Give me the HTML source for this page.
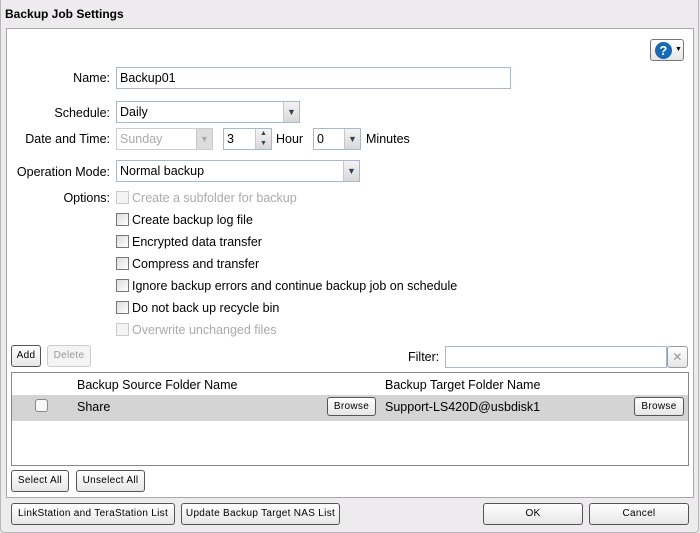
<!DOCTYPE html>
<html><head><style>
*{box-sizing:border-box;margin:0;padding:0}
body{width:700px;height:533px;background:#edebed;font-family:"Liberation Sans",sans-serif;font-size:12.5px;color:#000;position:relative;overflow:hidden}
.a{position:absolute}
.outer{left:0;top:0;width:699px;height:533px;border:1px solid #b8b8b8;border-top:none;border-radius:0 0 4px 4px}
.panel{left:6px;top:28px;width:688px;height:470px;background:#fff;border:1px solid #a8a8a8}
.lbl{text-align:right;width:110px;left:0}
.inp{background:#fff;border:1px solid #a9b8cc;height:22px;padding:3px 3px;white-space:nowrap}
.dd{position:absolute;right:0;top:0;width:16px;height:20px;background:linear-gradient(#f4f4f4,#d8d8d8);border-left:1px solid #c8c8c8;font-size:9px;text-align:center;line-height:20px;color:#345}
.btn{border:1px solid #555;border-radius:3px;background:linear-gradient(#fff,#e6e6e6);text-align:center;font-size:10px;line-height:20px;height:22px;letter-spacing:.3px}
.cb{width:13px;height:13px;border:1px solid #777;background:linear-gradient(135deg,#ddd,#fff)}
.dis{color:#aaa}
.dis .cb{border-color:#ccc;background:#f4f4f4}
.opt{left:116px;height:16px}
.opt span{position:absolute;left:16px;top:0;white-space:nowrap}
</style></head><body>
<div class="a outer"></div>
<div class="a" style="left:5px;top:7px;font-weight:bold;font-size:12px">Backup Job Settings</div>
<div class="a panel"></div>
<div class="a btn" style="left:650px;top:39px;width:34px;height:22px;border-color:#777">
 <span style="position:absolute;left:4px;top:2px;width:17px;height:17px;border-radius:50%;background:#1669b4;color:#fff;font-weight:bold;font-size:13px;line-height:17px">?</span>
 <span style="position:absolute;left:24px;top:0;font-size:7px">▼</span></div>

<div class="a lbl" style="top:71px">Name:</div>
<div class="a inp" style="left:116px;top:67px;width:395px">Backup01</div>

<div class="a lbl" style="top:106px">Schedule:</div>
<div class="a inp" style="left:116px;top:101px;width:184px">Daily<div class="dd">▼</div></div>

<div class="a lbl" style="top:132px">Date and Time:</div>
<div class="a inp dis" style="left:116px;top:128px;width:97px;border-color:#ccc">Sunday<div class="dd" style="background:#ddd;color:#aaa">▼</div></div>
<div class="a inp" style="left:223px;top:128px;width:49px">3<div class="dd" style="font-size:7px;line-height:10px">▲<br>▼</div></div>
<div class="a" style="left:276px;top:132px">Hour</div>
<div class="a inp" style="left:313px;top:128px;width:48px">0<div class="dd">▼</div></div>
<div class="a" style="left:366px;top:132px">Minutes</div>

<div class="a lbl" style="top:165px">Operation Mode:</div>
<div class="a inp" style="left:116px;top:160px;width:244px">Normal backup<div class="dd">▼</div></div>

<div class="a lbl" style="top:191px">Options:</div>
<div class="a opt dis" style="top:191px"><div class="cb"></div><span>Create a subfolder for backup</span></div>
<div class="a opt" style="top:213px"><div class="cb"></div><span>Create backup log file</span></div>
<div class="a opt" style="top:235px"><div class="cb"></div><span>Encrypted data transfer</span></div>
<div class="a opt" style="top:257px"><div class="cb"></div><span>Compress and transfer</span></div>
<div class="a opt" style="top:279px"><div class="cb"></div><span>Ignore backup errors and continue backup job on schedule</span></div>
<div class="a opt" style="top:301px"><div class="cb"></div><span>Do not back up recycle bin</span></div>
<div class="a opt dis" style="top:323px"><div class="cb"></div><span>Overwrite unchanged files</span></div>

<div class="a btn" style="left:11px;top:345px;width:30px">Add</div>
<div class="a btn" style="left:47px;top:345px;width:44px;border-color:#ccc;color:#999;background:#f4f4f4">Delete</div>
<div class="a" style="left:408px;top:350px">Filter:</div>
<div class="a inp" style="left:445px;top:346px;width:222px"></div>
<div class="a btn" style="left:667px;top:346px;width:21px;border-color:#999;color:#999;font-size:12px">✕</div>

<div class="a" style="left:11px;top:372px;width:678px;height:94px;border:1px solid #888;background:#fff"></div>
<div class="a" style="left:77px;top:378px">Backup Source Folder Name</div>
<div class="a" style="left:385px;top:378px">Backup Target Folder Name</div>
<div class="a" style="left:12px;top:395px;width:676px;height:26px;background:#d4d4d4"></div>
<div class="a" style="left:35px;top:399px;width:13px;height:13px;border:1px solid #888;border-radius:3px;background:#f8f8f8"></div>
<div class="a" style="left:77px;top:400px">Share</div>
<div class="a btn" style="left:327px;top:397px;width:49px;height:19px;line-height:17px">Browse</div>
<div class="a" style="left:385px;top:400px">Support-LS420D@usbdisk1</div>
<div class="a btn" style="left:634px;top:397px;width:50px;height:19px;line-height:17px">Browse</div>

<div class="a btn" style="left:11px;top:470px;width:58px">Select All</div>
<div class="a btn" style="left:76px;top:470px;width:69px">Unselect All</div>

<div class="a btn" style="left:11px;top:503px;width:164px">LinkStation and TeraStation List</div>
<div class="a btn" style="left:181px;top:503px;width:159px">Update Backup Target NAS List</div>
<div class="a btn" style="left:483px;top:503px;width:100px">OK</div>
<div class="a btn" style="left:589px;top:503px;width:100px">Cancel</div>
</body></html>
